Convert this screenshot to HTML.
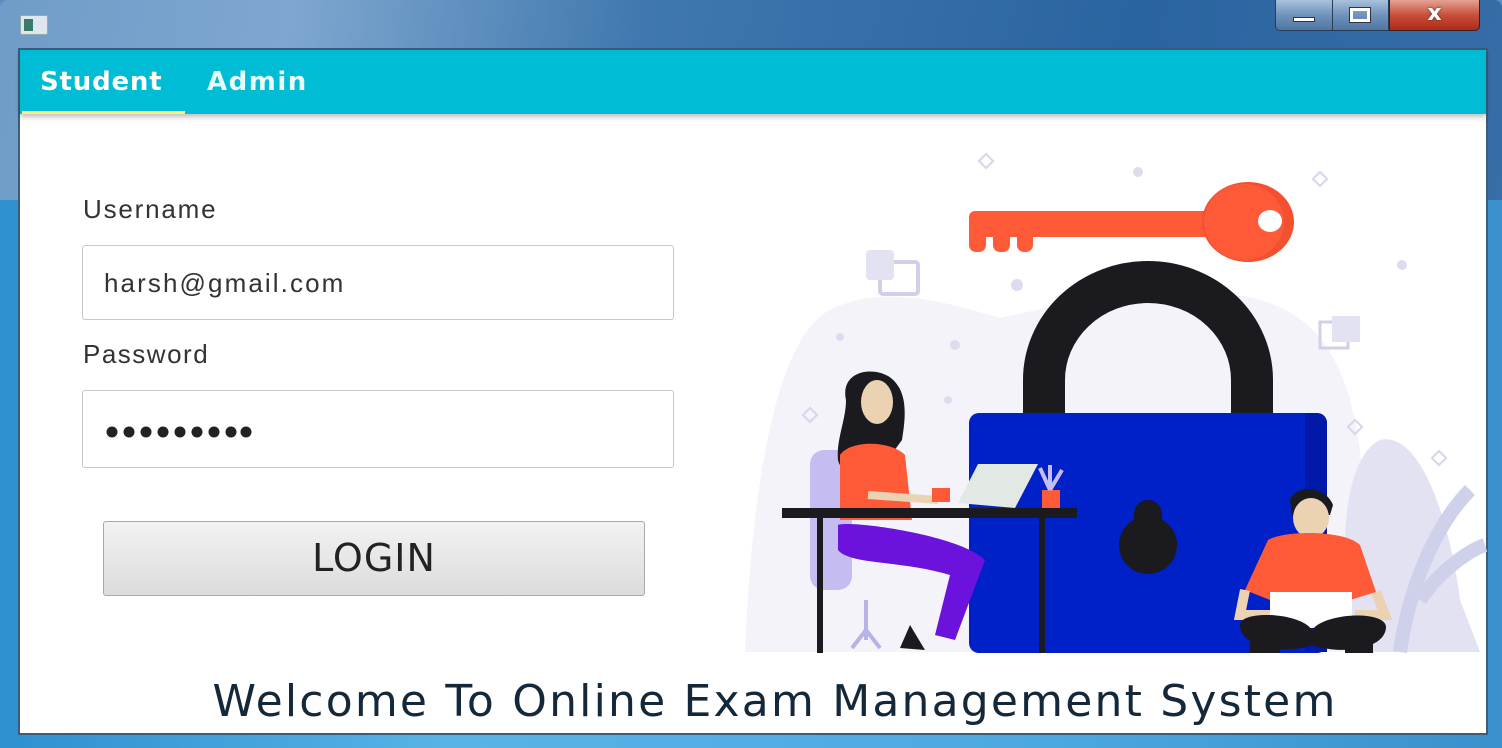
<!DOCTYPE html>
<html><head><meta charset="utf-8"><style>
*{margin:0;padding:0;box-sizing:border-box}
body{width:1502px;height:748px;overflow:hidden;position:relative;font-family:"Liberation Sans",sans-serif;background:#5b8fc0}
.abs{position:absolute}
</style></head><body>
<div class="abs" style="left:0;top:0;width:1502px;height:748px;background:linear-gradient(100deg,#6f9cc8 0%,#7ea7cf 18%,#3f77ae 40%,#2a64a0 70%,#3a70a8 100%);border-radius:8px 8px 0 0"></div>
<div class="abs" style="left:0;top:200px;width:1502px;height:548px;background:linear-gradient(90deg,#2f8fd0,#58b4e6 30%,#4ca8e0 70%,#3a90cc)"></div>
<div class="abs" style="left:20px;top:15px;width:28px;height:20px;background:#dfe6ee;border:1px solid #9aa;border-radius:2px"><div style="margin:3px;width:9px;height:12px;background:#3a7a6a"></div></div>
<div class="abs" style="left:1275px;top:0;width:114px;height:31px;border:1px solid #2a3d55;border-top:none;border-radius:0 0 0 5px;background:linear-gradient(#a9c1dc,#6f93bb 50%,#4e76a4)"></div>
<div class="abs" style="left:1332px;top:0;width:1px;height:31px;background:#2a3d55"></div>
<div class="abs" style="left:1293px;top:17px;width:22px;height:5px;background:#fff;border:1px solid #334"></div>
<div class="abs" style="left:1350px;top:8px;width:20px;height:14px;border:3px solid #fff;outline:1px solid #334"></div>
<div class="abs" style="left:1389px;top:0;width:91px;height:31px;border:1px solid #3a2020;border-top:none;border-radius:0 0 5px 0;background:linear-gradient(#e4a293,#c8503a 50%,#b02a18);color:#fff;font:bold 22px/28px 'DejaVu Sans',sans-serif;text-align:center;text-shadow:0 0 2px #333">x</div>
<div class="abs" style="left:18px;top:48px;width:1470px;height:687px;background:#fff;border:2px solid #3d5c7a"></div>
<div class="abs" style="left:20px;top:50px;width:1466px;height:64px;background:#00bcd4;box-shadow:0 3px 5px rgba(0,0,0,.25)"></div>
<div class="abs" style="left:40px;top:66px;color:#fff;font:bold 26px/32px 'DejaVu Sans',sans-serif;letter-spacing:0.8px">Student</div>
<div class="abs" style="left:207px;top:66px;color:#e8fbff;font:bold 26px/32px 'DejaVu Sans',sans-serif;letter-spacing:1.5px">Admin</div>
<div class="abs" style="left:22px;top:111px;width:163px;height:3px;background:#fff176"></div>
<div class="abs" style="left:83px;top:194px;font-size:26px;color:#333;letter-spacing:1.8px">Username</div>
<div class="abs" style="left:82px;top:245px;width:592px;height:75px;border:1px solid #c8c8c8;border-radius:3px;background:#fff;font-size:26px;color:#333;padding:22px 0 0 21px;letter-spacing:2.1px">harsh@gmail.com</div>
<div class="abs" style="left:83px;top:339px;font-size:26px;color:#333;letter-spacing:1.5px">Password</div>
<div class="abs" style="left:82px;top:390px;width:592px;height:78px;border:1px solid #c8c8c8;border-radius:3px;background:#fff"></div>
<div class="abs" style="left:103px;top:521px;width:542px;height:75px;border:1px solid #aaa;border-radius:3px;background:linear-gradient(#f2f2f2,#dcdcdc);font-size:38px;color:#222;text-align:center;line-height:73px;font-family:'DejaVu Sans',sans-serif;letter-spacing:1px">LOGIN</div>
<div class="abs" style="left:20px;top:674px;width:1510px;text-align:center;font:44px/56px 'DejaVu Sans',sans-serif;color:#14283a;letter-spacing:2.2px">Welcome To Online Exam Management System</div>
<svg class="abs" style="left:0;top:0" width="1502" height="748">
<g fill="#222"><circle cx="112" cy="432" r="5.5"/><circle cx="129" cy="432" r="5.5"/><circle cx="146" cy="432" r="5.5"/><circle cx="163" cy="432" r="5.5"/><circle cx="180" cy="432" r="5.5"/><circle cx="197" cy="432" r="5.5"/><circle cx="214" cy="432" r="5.5"/><circle cx="231" cy="432" r="5.5"/><circle cx="246" cy="432" r="5.5"/></g>
<path d="M745 652 C750 520 770 340 830 310 C880 285 940 300 1000 318 C1080 300 1180 280 1260 300 C1330 320 1350 380 1360 450 L1380 652Z" fill="#f3f3f9"/>
<path d="M1350 652 C1340 560 1340 460 1380 440 C1420 430 1450 520 1460 600 L1480 652Z" fill="#e2e2f2"/>
<path d="M1400 652 C1410 580 1440 520 1470 490 M1420 600 C1440 570 1470 550 1485 545" stroke="#cfd0ea" stroke-width="14" fill="none"/>
<g fill="none" stroke="#d6d6ec" stroke-width="2">
<rect x="981" y="156" width="10" height="10" transform="rotate(45 986 161)"/>
<rect x="1315" y="174" width="10" height="10" transform="rotate(45 1320 179)"/>
<rect x="805" y="410" width="10" height="10" transform="rotate(45 810 415)"/>
<rect x="1350" y="422" width="10" height="10" transform="rotate(45 1355 427)"/>
<rect x="1434" y="453" width="10" height="10" transform="rotate(45 1439 458)"/>
<rect x="880" y="262" width="38" height="32" rx="3" stroke="#d0d0ea" stroke-width="4"/>
<rect x="1320" y="322" width="28" height="26" stroke="#d0d0ea" stroke-width="3"/>
</g>
<rect x="866" y="250" width="28" height="30" rx="4" fill="#e2e2f2"/>
<rect x="1332" y="316" width="28" height="26" fill="#e2e2f2"/>
<g fill="#dcdcee"><circle cx="1138" cy="172" r="5"/><circle cx="1017" cy="285" r="6"/><circle cx="1402" cy="265" r="5"/><circle cx="840" cy="337" r="4"/><circle cx="955" cy="345" r="5"/><circle cx="948" cy="400" r="4"/></g>
<rect x="969" y="211" width="245" height="26" rx="6" fill="#fe5a37"/>
<rect x="969" y="220" width="17" height="32" rx="7" fill="#fe5a37"/>
<rect x="993" y="220" width="17" height="32" rx="7" fill="#fe5a37"/>
<rect x="1017" y="220" width="16" height="32" rx="7" fill="#fe5a37"/>
<ellipse cx="1248" cy="222" rx="46" ry="40" fill="#f2502e"/>
<ellipse cx="1244" cy="222" rx="40" ry="38" fill="#fe5a37"/>
<ellipse cx="1270" cy="221" rx="12" ry="11" fill="#fff"/>
<path d="M1044 415 V380 A104 98 0 0 1 1252 380 V415" fill="none" stroke="#1b1a1f" stroke-width="42"/>
<rect x="969" y="413" width="358" height="240" rx="10" fill="#0020c8"/>
<path d="M1305 413 H1317 A10 10 0 0 1 1327 423 V652 H1305Z" fill="#0019a8"/>
<circle cx="1148" cy="545" r="29" fill="#1b1a1f"/>
<rect x="1134" y="500" width="28" height="50" rx="14" fill="#1b1a1f"/>
<rect x="810" y="450" width="42" height="140" rx="14" fill="#c5bdf2"/>
<path d="M866 600 V640 M866 630 L852 648 M866 630 L880 648" stroke="#b7b3e6" stroke-width="4"/>
<path d="M846 400 C840 372 870 366 888 376 C910 390 905 420 902 440 L880 470 L860 470 C848 470 840 470 838 460 C836 440 846 420 846 400Z" fill="#1b1a1f"/>
<ellipse cx="877" cy="402" rx="16" ry="22" fill="#ebd2b3"/>
<path d="M840 455 C850 440 890 440 905 455 L912 520 L840 520Z" fill="#fe5a37"/>
<path d="M868 495 L938 500" stroke="#ebd2b3" stroke-width="8"/>
<path d="M838 525 C850 520 960 535 985 560 L955 640 L935 635 L950 575 C900 560 850 565 838 550Z" fill="#6b12dc"/>
<path d="M910 625 L925 650 L900 648Z" fill="#1b1a1f"/>
<rect x="932" y="488" width="18" height="14" fill="#fe5a37"/>
<path d="M958 503 L978 464 L1038 464 L1015 508Z" fill="#e2e8e4"/>
<rect x="1042" y="490" width="18" height="20" fill="#fe5a37"/>
<path d="M1050 490 L1040 468 M1050 490 L1050 465 M1050 490 L1062 470" stroke="#c5bdf2" stroke-width="4"/>
<rect x="782" y="508" width="295" height="10" fill="#1b1a1f"/>
<rect x="817" y="515" width="6" height="138" fill="#1b1a1f"/>
<rect x="1039" y="515" width="6" height="138" fill="#1b1a1f"/>
<path d="M1290 500 C1295 485 1325 485 1333 505 L1330 515 L1292 515Z" fill="#1b1a1f"/>
<ellipse cx="1311" cy="518" rx="18" ry="20" fill="#ebd2b3"/>
<path d="M1268 540 C1285 530 1345 530 1360 545 L1376 592 L1350 600 L1345 620 L1275 620 L1270 600 L1245 590Z" fill="#fe5a37"/>
<path d="M1245 590 L1240 615 L1270 615 M1376 592 L1385 615 L1355 615" stroke="#ebd2b3" stroke-width="10" fill="none"/>
<rect x="1270" y="592" width="82" height="36" fill="#fff"/>
<path d="M1240 625 C1240 610 1300 612 1312 630 C1325 612 1388 610 1386 628 C1384 650 1340 655 1312 645 C1285 655 1240 648 1240 625Z" fill="#1b1a1f"/>
<rect x="1250" y="640" width="30" height="13" fill="#1b1a1f"/><rect x="1345" y="640" width="28" height="13" fill="#1b1a1f"/>
</svg>
</body></html>
